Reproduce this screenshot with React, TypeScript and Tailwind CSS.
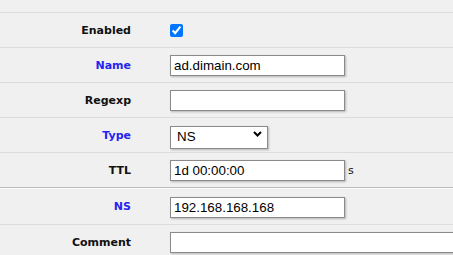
import React from "react";

const labelBase =
  "w-[131px] shrink-0 pt-[2px] text-right font-bold text-[11px] font-['DejaVu_Sans',Verdana,sans-serif]";

function Row({
  label,
  blue,
  children,
  className = "",
}: {
  label: string;
  blue?: boolean;
  children?: React.ReactNode;
  className?: string;
}) {
  return (
    <div className={`flex items-center h-[35px] border-t border-[#dcdcdc] ${className}`}>
      <div className={`${labelBase} ${blue ? "text-[#2424f0]" : "text-[#111]"}`}>{label}</div>
      <div className="ml-[39px] flex items-center">{children}</div>
    </div>
  );
}

const inputCls =
  "h-[21px] border border-[#8a8a8a] bg-white pl-[3px] text-[13.33px] text-black font-['Liberation_Sans',Arial,sans-serif] shadow-[1px_1px_2px_rgba(0,0,0,0.25)] outline-none";

export default function App() {
  return (
    <div className="w-[453px] h-[255px] overflow-hidden bg-[#f0f0f0]">
      <div className="h-[12px]" />
      <Row label="Enabled">
        <input
          type="checkbox"
          defaultChecked
          className="w-[13px] h-[13px] m-0 mt-[1px] accent-[#0075ff]"
        />
      </Row>
      <Row label="Name" blue>
        <input className={`${inputCls} w-[175px]`} defaultValue="ad.dimain.com" />
      </Row>
      <Row label="Regexp">
        <input className={`${inputCls} w-[175px]`} defaultValue="" />
      </Row>
      <Row label="Type" blue>
        <div className="relative mt-[2px]">
          <select
            className="appearance-none h-[23px] w-[98px] border border-[#8a8a8a] bg-white pl-[6px] text-[13.33px] text-black font-['Liberation_Sans',Arial,sans-serif] shadow-[1px_1px_2px_rgba(0,0,0,0.25)] outline-none"
            defaultValue="NS"
          >
            <option>NS</option>
          </select>
          <svg
            className="absolute left-[83px] top-[8px] pointer-events-none"
            width="9"
            height="6"
            viewBox="0 0 9 6"
          >
            <path d="M1 1 L4.5 4.5 L8 1" fill="none" stroke="#000" strokeWidth="2" />
          </svg>
        </div>
      </Row>
      <Row label="TTL">
        <input className={`${inputCls} w-[175px]`} defaultValue="1d 00:00:00" />
        <span className="ml-[3px] pt-[3px] text-[11px] text-[#111] font-['DejaVu_Sans',Verdana,sans-serif]">
          s
        </span>
      </Row>
      <div className="h-[1px] bg-[#bcbcbc]" />
      <Row label="NS" blue className="!border-[#fbfbfb] h-[36px]">
        <input className={`${inputCls} w-[175px] mt-[2px]`} defaultValue="192.168.168.168" />
      </Row>
      <Row label="Comment">
        <input className={`${inputCls} w-[320px]`} defaultValue="" />
      </Row>
    </div>
  );
}
